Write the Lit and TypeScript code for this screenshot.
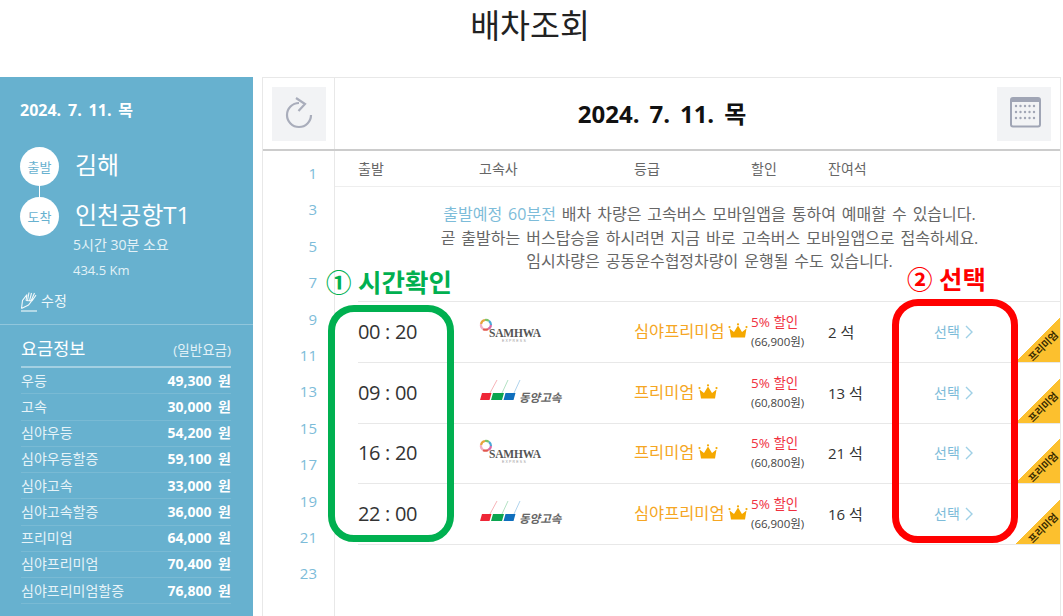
import { LitElement, html, css, svg } from "lit";
import { customElement } from "lit/decorators.js";

const FEES: [string, string][] = [
  ["우등", "49,300 원"], ["고속", "30,000 원"], ["심야우등", "54,200 원"],
  ["심야우등할증", "59,100 원"], ["심야고속", "33,000 원"], ["심야고속할증", "36,000 원"],
  ["프리미엄", "64,000 원"], ["심야프리미엄", "70,400 원"], ["심야프리미엄할증", "76,800 원"],
];
const HOURS = [1, 3, 5, 7, 9, 11, 13, 15, 17, 19, 21, 23];
const ROWS = [
  { time: "00 : 20", co: "s", grade: "심야프리미엄", price: "(66,900원)", seats: "2 석" },
  { time: "09 : 00", co: "d", grade: "프리미엄", price: "(60,800원)", seats: "13 석" },
  { time: "16 : 20", co: "s", grade: "프리미엄", price: "(60,800원)", seats: "21 석" },
  { time: "22 : 00", co: "d", grade: "심야프리미엄", price: "(66,900원)", seats: "16 석" },
];

const samhwa = html`<svg class="logo" width="66" height="28" viewBox="0 0 66 28">
  <g fill="none" stroke-width="2.2">
    <path d="M2 6 A5 5 0 0 1 6 2" stroke="#e8a33c" /><path d="M6 2 A5 5 0 0 1 10 3" stroke="#7cc36a" />
    <path d="M10 3 A5 5 0 0 1 12 7" stroke="#4aa8d8" /><path d="M12 7 A5 5 0 0 1 9 11" stroke="#d76aa8" />
    <path d="M9 11 A5 5 0 0 1 4 11" stroke="#e2584f" /><path d="M4 11 A5 5 0 0 1 2 6" stroke="#f2b0c4" />
  </g>
  <text x="10" y="18.5" class="sam">SAMHWA</text>
  <text x="23" y="23.5" class="exp">EXPRESS</text>
</svg>`;

const donggyang = html`<svg class="logo" width="86" height="28" viewBox="0 0 86 28">
  <g stroke-width="1">
    <path d="M11 14 L18 1" stroke="#f7b4b8" /><path d="M23 14 L29 1" stroke="#b4e2c4" /><path d="M35 14 L41 1" stroke="#b0d4ee" />
  </g>
  <path d="M3 14 H12.500 L10.500 21 H1 Z" fill="#ee2737" />
  <path d="M14 14 H25 L23 21 H12 Z" fill="#0ba44f" />
  <path d="M26.500 14 H36.500 L34.500 21 H24.500 Z" fill="#0f6fbd" />
  <text x="40" y="23" class="dong">동양고속</text>
</svg>`;

const crown = svg`<svg class="crown" width="20" height="16" viewBox="0 0 20 16">
  <path d="M3 14.500 L1.500 5.500 L6 9 L10 2.500 L14 9 L18.500 5.500 L17 14.500 Z" fill="#f5a800" />
  <circle cx="1.500" cy="4" r="1.100" fill="#f5a800" /><circle cx="10" cy="1.300" r="1.100" fill="#f5a800" /><circle cx="18.500" cy="4" r="1.100" fill="#f5a800" />
</svg>`;

@customElement("app-root")
export class AppRoot extends LitElement {
  static styles = css`
    :host {
      display: block; width: 1063px; height: 616px; overflow: hidden; background: #fff; color: #333;
      font-family: "Open Sans", "Noto Sans CJK KR", sans-serif;
    }
    .title { height: 77px; box-sizing: border-box; padding-top: 1px; text-align: center; }
    .title h1 { margin: 0; font-size: 32.500px; line-height: 50px; font-weight: 400; color: #222; padding-right: 3px; }
    .page { display: flex; gap: 9px; height: 539px; }
    .side { width: 253px; flex: none; background: #67b1cf; color: #fff; overflow: hidden; }
    .s-date { margin: 23px 0 0 20px; font-size: 16px; font-weight: 700; line-height: 20px; word-spacing: 2.700px; }
    .route { margin: 27px 0 0 20px; }
    .stop { display: flex; align-items: center; gap: 16px; height: 39px; }
    .dot {
      width: 39px; height: 39px; border-radius: 50%; background: #fff; color: #67b1cf; flex: none;
      display: flex; align-items: center; justify-content: center; font-size: 13px; line-height: 16px;
    }
    .name { font-size: 24px; line-height: 36px; padding-bottom: 3px; }
    .link { width: 1px; height: 11px; margin-left: 19px; background: #fff; }
    .meta { margin-left: 73px; font-size: 14px; color: #e3f1f7; }
    .meta div { line-height: 18px; margin-bottom: 7px; }
    .meta .km { font-size: 13px; }
    .edit { display: flex; align-items: center; gap: 3px; margin: 11px 0 0 20px; height: 22px; font-size: 14px; line-height: 20px; color: #eef7fa; }
    .fees { margin-top: 12px; border-top: 1px solid rgba(255,255,255,.28); padding: 0 22px 0 21px; }
    .fee-h { display: flex; justify-content: space-between; align-items: flex-end; height: 43px; box-sizing: border-box; padding-bottom: 6px; border-bottom: 2px solid rgba(255,255,255,.4); }
    .fee-h b { font-weight: 400; font-size: 17.500px; line-height: 24px; }
    .fee-h span { font-size: 13.500px; line-height: 20px; color: #e3f1f7; }
    .fee { display: flex; justify-content: space-between; align-items: center; height: 26.250px; box-sizing: border-box; border-bottom: 1px solid rgba(255,255,255,.12); font-size: 14px; line-height: 18px; color: #e6f3f8; }
    .fee b { color: #fff; font-weight: 700; font-size: 14px; word-spacing: 3px; }

    .main { position: relative; width: 799px; flex: none; box-sizing: border-box; border: 1px solid #e8e8e8; border-bottom: 0; }
    .head { display: flex; height: 73px; box-sizing: border-box; border-bottom: 2px solid #ccc; }
    .cell-l { width: 72px; flex: none; box-sizing: border-box; border-right: 1px solid #e8e8e8; padding: 9px 0 0 9px; }
    .btn { width: 54px; height: 54px; background: #f2f3f5; display: block; }
    .h-date { flex: 1; text-align: center; margin: 0; font-size: 24px; font-weight: 700; line-height: 72px; color: #111; padding-right: 8px; word-spacing: 3.700px; }
    .cell-r { width: 63px; flex: none; padding: 9px 9px 0 0; box-sizing: border-box; }
    .body { display: flex; height: 465px; }
    .hours { width: 72px; flex: none; box-sizing: border-box; border-right: 1px solid #e8e8e8; padding: 4px 17px 0 0; text-align: right; color: #7dbcd9; font-size: 15px; }
    .hours div { height: 36.400px; line-height: 36.400px; }
    .content { flex: 1; min-width: 0; }
    .cols, .row { display: grid; grid-template-columns: 121px 155px 117px 77px 106px 1fr; align-items: center; }
    .cols { height: 36px; box-sizing: border-box; padding-left: 23px; border-bottom: 1px solid #eee; font-size: 14px; line-height: 18px; color: #666; }
    .notice { height: 114px; box-sizing: border-box; padding: 16px 0 0 24px; text-align: center; font-size: 16px; line-height: 23.600px; color: #666; word-spacing: 1.800px; }
    .notice em { font-style: normal; color: #7dbcd9; }
    .rows { margin-left: 23px; border-top: 1px solid #e8e8e8; }
    .row { position: relative; height: 60.750px; box-sizing: border-box; border-bottom: 1px solid #e8e8e8; }
    .time { font-size: 20px; color: #333; line-height: 26px; letter-spacing: -.5px; word-spacing: .5px; }
    .logo { display: block; }
    .sam { font: 700 11.500px "Liberation Serif", serif; fill: #555; letter-spacing: -.2px; }
    .exp { font: 400 3.500px "Liberation Sans", sans-serif; fill: #999; letter-spacing: 1.200px; }
    .dong { font: italic 700 11.500px "Noto Sans CJK KR", sans-serif; fill: #666; }
    .grade { display: flex; align-items: center; gap: 4px; font-size: 16.400px; line-height: 24px; color: #f5a623; white-space: nowrap; padding-bottom: 2px; }
    .crown { flex: none; }
    .disc { display: flex; flex-direction: column; }
    .disc b { font-weight: 400; font-size: 13.500px; line-height: 19px; color: #f0313f; }
    .disc span { font-size: 11.500px; line-height: 19px; color: #444; white-space: nowrap; }
    .seats { font-size: 15px; line-height: 22px; color: #333; }
    .pick { display: flex; align-items: center; gap: 5px; font-size: 14px; line-height: 20px; color: #7dbcd9; }
    .ribbon {
      position: absolute; right: 0; bottom: 0; width: 44px; height: 44px;
      background: linear-gradient(to bottom right, transparent 50%, #fcc02e 50%);
    }
    .ribbon span {
      position: absolute; left: 6.500px; top: 21px; width: 40px; text-align: center; transform: rotate(-45deg);
      font-size: 10px; line-height: 14px; font-weight: 700; color: #3a2c00; white-space: nowrap;
    }
    .frame { position: absolute; box-sizing: border-box; border-width: 7px; border-style: solid; border-radius: 26px; pointer-events: none; }
    .green { left: 65px; top: 227px; width: 126px; height: 237px; border-color: #00b050; }
    .red { left: 629px; top: 221px; width: 126px; height: 244px; border-color: #ff0000; }
    .note { position: absolute; font-size: 25.500px; line-height: 32px; font-weight: 700; white-space: nowrap; }
    .n-g { left: 63px; top: 188px; color: #00b050; }
    .n-r { left: 644px; top: 185px; color: #ff0000; }
  `;

  render() {
    return html`
      <div class="title"><h1>배차조회</h1></div>
      <div class="page">
        <aside class="side">
          <div class="s-date">2024. 7. 11. 목</div>
          <div class="route">
            <div class="stop"><span class="dot">출발</span><span class="name">김해</span></div>
            <div class="link"></div>
            <div class="stop"><span class="dot">도착</span><span class="name">인천공항T1</span></div>
          </div>
          <div class="meta"><div>5시간 30분 소요</div><div class="km">434.5 Km</div></div>
          <div class="edit">
            <svg width="18" height="21" viewBox="0 0 18 21" fill="none" stroke="#f2f9fb" stroke-width="1.100">
              <path d="M1.500 17.500 L2.500 9.500 L7 3.500 M1.500 17.500 L8.500 14 L15.500 5 M7 3.500 L6 9.500 M9 1.500 L7.500 9.500 M11.500 2 L9.500 10 M14.500 2 L11 10 M16 4 L12 10 M6 9.500 L12 10" />
              <path d="M1 20 H17" />
            </svg>
            <span>수정</span>
          </div>
          <div class="fees">
            <div class="fee-h"><b>요금정보</b><span>(일반요금)</span></div>
            ${FEES.map(([a, b]) => html`<div class="fee"><span>${a}</span><b>${b}</b></div>`)}
          </div>
        </aside>
        <section class="main">
          <div class="head">
            <div class="cell-l">
              <svg class="btn" viewBox="0 0 54 54" fill="none" stroke="#a9adbb" stroke-width="2.200">
                <path d="M27 16 A12 12 0 1 0 39 28" />
                <path d="M24 11 L33 17 L26.500 24" />
              </svg>
            </div>
            <h2 class="h-date">2024. 7. 11. 목</h2>
            <div class="cell-r">
              <svg class="btn" viewBox="0 0 54 54">
                <rect x="14" y="11" width="29" height="28.500" rx="2" fill="none" stroke="#a0a5b5" stroke-width="2" />
                <rect x="14" y="11" width="29" height="4" fill="#a0a5b5" />
                ${[19, 25, 31].map((y) => [19, 23.5, 28, 32.5, 37].map((x) => svg`<circle cx=${x} cy=${y} r="1.200" fill="#a0a5b5" />`))}
              </svg>
            </div>
          </div>
          <div class="body">
            <div class="hours">${HOURS.map((h) => html`<div>${h}</div>`)}</div>
            <div class="content">
              <div class="cols"><span>출발</span><span>고속사</span><span>등급</span><span>할인</span><span>잔여석</span></div>
              <div class="notice">
                <em>출발예정 60분전</em> 배차 차량은 고속버스 모바일앱을 통하여 예매할 수 있습니다.<br />
                곧 출발하는 버스탑승을 하시려면 지금 바로 고속버스 모바일앱으로 접속하세요.<br />
                임시차량은 공동운수협정차량이 운행될 수도 있습니다.
              </div>
              <div class="rows">
                ${ROWS.map((r) => html`
                  <div class="row">
                    <span class="time">${r.time}</span>
                    ${r.co === "s" ? samhwa : donggyang}
                    <span class="grade">${r.grade}${crown}</span>
                    <span class="disc"><b>5% 할인</b><span>${r.price}</span></span>
                    <span class="seats">${r.seats}</span>
                    <span class="pick">선택
                      <svg width="8" height="14" viewBox="0 0 8 14" fill="none" stroke="#9fd0e6" stroke-width="1.400"><path d="M1 1 L7 7 L1 13" /></svg>
                    </span>
                    <span class="ribbon"><span>프리미엄</span></span>
                  </div>`)}
              </div>
            </div>
          </div>
          <div class="note n-g">① 시간확인</div>
          <div class="note n-r">② 선택</div>
          <div class="frame green"></div>
          <div class="frame red"></div>
        </section>
      </div>
    `;
  }
}
